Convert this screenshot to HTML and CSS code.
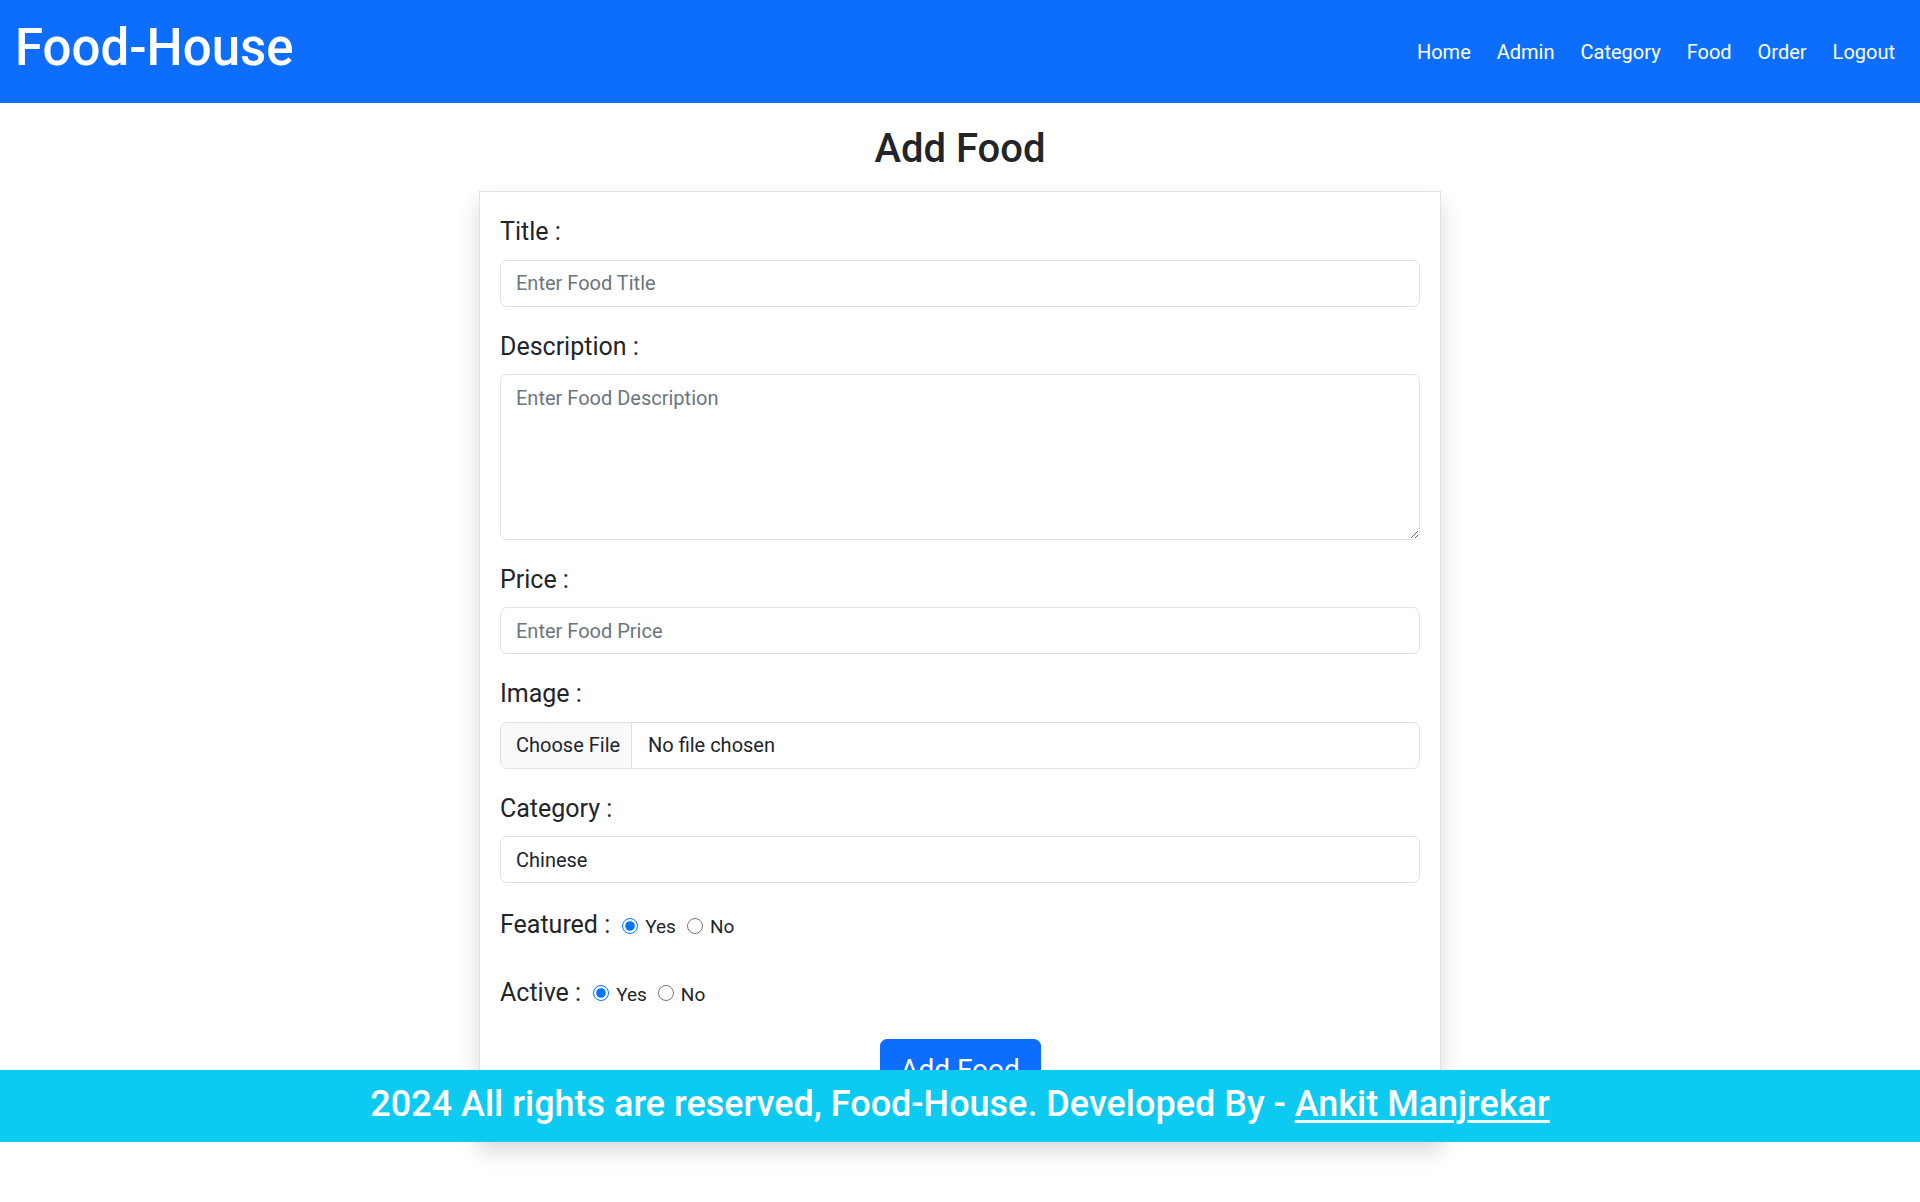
FILE: index.html
```html
<!DOCTYPE html>
<html lang="en">
<head>
<meta charset="utf-8">
<title>Food-House - Add Food</title>
<link rel="stylesheet" href="styles.css">
</head>
<body>
<nav class="navbar">
  <a class="brand" href="#">Food-House</a>
  <ul class="nav">
    <li><a class="nav-link" href="#">Home</a></li>
    <li><a class="nav-link" href="#">Admin</a></li>
    <li><a class="nav-link" href="#">Category</a></li>
    <li><a class="nav-link" href="#">Food</a></li>
    <li><a class="nav-link" href="#">Order</a></li>
    <li><a class="nav-link" href="#">Logout</a></li>
  </ul>
</nav>
<main class="page">
  <h2 class="page-title">Add Food</h2>
  <form class="card">
    <div class="field">
      <label class="field-label" for="title">Title :</label>
      <input class="control" id="title" type="text" placeholder="Enter Food Title">
    </div>
    <div class="field">
      <label class="field-label" for="desc">Description :</label>
      <textarea class="control textarea" id="desc" placeholder="Enter Food Description"></textarea>
    </div>
    <div class="field">
      <label class="field-label" for="price">Price :</label>
      <input class="control" id="price" type="text" placeholder="Enter Food Price">
    </div>
    <div class="field">
      <label class="field-label" for="image">Image :</label>
      <div class="control file-control">
        <span class="file-button">Choose File</span>
        <span class="file-name">No file chosen</span>
      </div>
    </div>
    <div class="field">
      <label class="field-label" for="cat">Category :</label>
      <select class="control select" id="cat">
        <option>Chinese</option>
      </select>
    </div>
    <div class="radio-row featured">
      <span class="field-label">Featured :</span>
      <input class="radio" type="radio" name="featured" id="fy" checked>
      <label class="radio-text" for="fy">Yes</label>
      <input class="radio" type="radio" name="featured" id="fn">
      <label class="radio-text" for="fn">No</label>
    </div>
    <div class="radio-row active">
      <span class="field-label">Active :</span>
      <input class="radio" type="radio" name="active" id="ay" checked>
      <label class="radio-text" for="ay">Yes</label>
      <input class="radio" type="radio" name="active" id="an">
      <label class="radio-text" for="an">No</label>
    </div>
    <div class="actions">
      <button class="btn" type="button">Add Food</button>
    </div>
  </form>
</main>
<footer class="footer">
  <p class="footer-text">2024 All rights are reserved, Food-House. Developed By - <a class="footer-link" href="#">Ankit Manjrekar</a></p>
</footer>
</body>
</html>
```

FILE: styles.css
```css
* { box-sizing: border-box; }

html, body {
  margin: 0;
  padding: 0;
}

body {
  font-family: Roboto, "Liberation Sans", Arial, sans-serif;
  font-size: 20px;
  line-height: 1.5;
  color: #212529;
  background: #ffffff;
  position: relative;
  min-height: 1202px;
}

.navbar {
  height: 103px;
  background: #0d6efd;
  display: flex;
  align-items: center;
  justify-content: space-between;
  padding: 0 12px 0 15px;
}

.brand {
  color: #ffffff;
  text-decoration: none;
  font-size: 51px;
  font-weight: 500;
  line-height: 1.2;
  margin-top: -7px;
}

.nav {
  display: flex;
  list-style: none;
  margin: 0;
  padding: 0;
}

.nav-link {
  display: block;
  color: #ffffff;
  text-decoration: none;
  font-size: 20px;
  line-height: 30px;
  padding: 0 13px;
}

.page {
  display: flex;
  flex-direction: column;
  align-items: center;
}

.page-title {
  margin: 22px 0 18px;
  font-size: 40px;
  font-weight: 500;
  line-height: 1.2;
  text-align: center;
}

.card {
  width: 962px;
  border: 1px solid #dee2e6;
  background: #ffffff;
  box-shadow: 0 10px 20px rgba(0, 0, 0, 0.15);
  padding: 21px 20px 40px;
  display: flex;
  flex-direction: column;
}

.field {
  display: flex;
  flex-direction: column;
  margin-bottom: 21px;
}

.field-label {
  font-size: 25px;
  line-height: 37.5px;
  margin-bottom: 9px;
}

.control {
  display: block;
  width: 100%;
  height: 47px;
  padding: 7.5px 15px;
  font-family: inherit;
  font-size: 20px;
  line-height: 30px;
  color: #212529;
  background: #ffffff;
  border: 1px solid #dee2e6;
  border-radius: 7px;
  outline: none;
}

.control::placeholder {
  color: #6c757d;
  opacity: 1;
}

.textarea {
  height: 165.5px;
  resize: vertical;
}

.select {
  appearance: none;
  -webkit-appearance: none;
}

.file-control {
  display: flex;
  padding: 0;
  overflow: hidden;
}

.file-button {
  background: #f8f9fa;
  border-right: 1px solid #dee2e6;
  padding: 7.5px 15px;
  width: 131px;
  flex: none;
  white-space: nowrap;
  color: #212529;
}

.file-name {
  padding: 7.5px 16px;
  white-space: nowrap;
  color: #212529;
}

.radio-row {
  display: flex;
  align-items: center;
  height: 37.5px;
}

.radio-row .field-label {
  margin-bottom: 0;
  margin-right: 12px;
}

.featured {
  margin-top: 2px;
}

.active {
  margin-top: 30px;
}

.radio {
  width: 16px;
  height: 16px;
  margin: 2px 7px 0 0;
}

.radio-text {
  font-size: 19px;
  line-height: 27px;
  margin-right: 11px;
  margin-top: 4px;
}

.actions {
  display: flex;
  justify-content: center;
  margin-top: 27.5px;
}

.btn {
  width: 161px;
  height: 62px;
  border: 1px solid #0d6efd;
  border-radius: 7px;
  background: #0d6efd;
  color: #ffffff;
  font-family: inherit;
  font-size: 28px;
  line-height: 42px;
  padding: 9px 10px;
}

.footer {
  position: absolute;
  top: 1070px;
  left: 0;
  right: 0;
  height: 72px;
  background: #0dcaf0;
  display: flex;
  align-items: center;
  justify-content: center;
}

.footer-text {
  margin: 0 0 3px;
  color: #ffffff;
  font-size: 36px;
  font-weight: 500;
  line-height: 1.2;
}

.footer-link {
  color: #ffffff;
  text-decoration: underline;
  text-decoration-thickness: 3px;
  text-underline-offset: 4px;
}
```
